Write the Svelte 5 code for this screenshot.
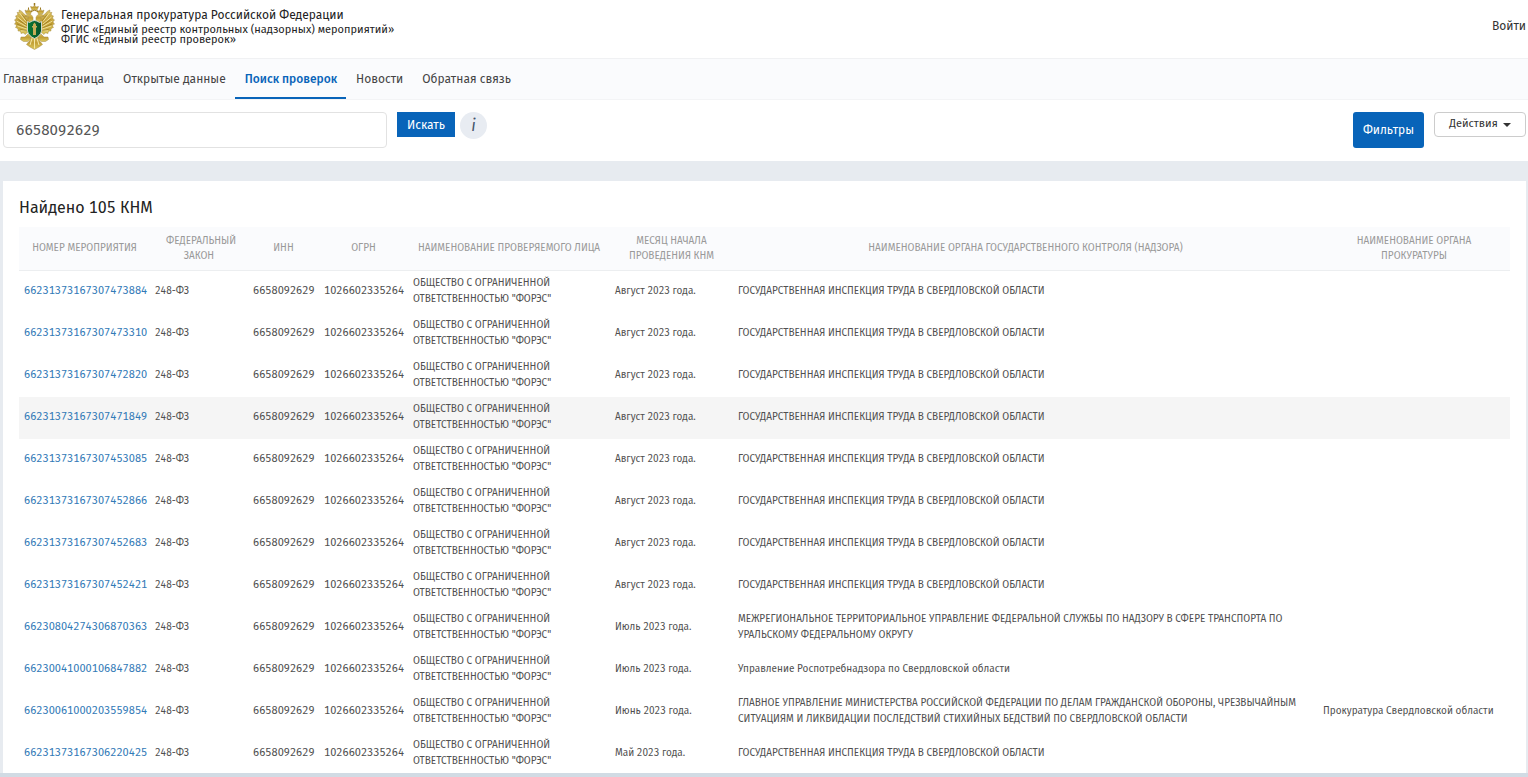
<script lang="ts">
  interface Inspection { id: string; month: string; organ: string; prosecutor?: string; }

  const law = "248-ФЗ";
  const inn = "6658092629";
  const ogrn = "1026602335264";
  const company = 'ОБЩЕСТВО С ОГРАНИЧЕННОЙ ОТВЕТСТВЕННОСТЬЮ "ФОРЭС"';
  const labour = "ГОСУДАРСТВЕННАЯ ИНСПЕКЦИЯ ТРУДА В СВЕРДЛОВСКОЙ ОБЛАСТИ";

  const nav = ["Главная страница", "Открытые данные", "Поиск проверок", "Новости", "Обратная связь"];
  const columns = [
    "Номер мероприятия",
    "Федеральный закон",
    "ИНН",
    "ОГРН",
    "Наименование проверяемого лица",
    "Месяц начала проведения КНМ",
    "Наименование органа государственного контроля (надзора)",
    "Наименование органа прокуратуры",
  ];
  const rows: Inspection[] = [
    { id: "66231373167307473884", month: "Август", organ: labour },
    { id: "66231373167307473310", month: "Август", organ: labour },
    { id: "66231373167307472820", month: "Август", organ: labour },
    { id: "66231373167307471849", month: "Август", organ: labour },
    { id: "66231373167307453085", month: "Август", organ: labour },
    { id: "66231373167307452866", month: "Август", organ: labour },
    { id: "66231373167307452683", month: "Август", organ: labour },
    { id: "66231373167307452421", month: "Август", organ: labour },
    { id: "66230804274306870363", month: "Июль", organ: "МЕЖРЕГИОНАЛЬНОЕ ТЕРРИТОРИАЛЬНОЕ УПРАВЛЕНИЕ ФЕДЕРАЛЬНОЙ СЛУЖБЫ ПО НАДЗОРУ В СФЕРЕ ТРАНСПОРТА ПО УРАЛЬСКОМУ ФЕДЕРАЛЬНОМУ ОКРУГУ" },
    { id: "66230041000106847882", month: "Июль", organ: "Управление Роспотребнадзора по Свердловской области" },
    { id: "66230061000203559854", month: "Июнь", organ: "ГЛАВНОЕ УПРАВЛЕНИЕ МИНИСТЕРСТВА РОССИЙСКОЙ ФЕДЕРАЦИИ ПО ДЕЛАМ ГРАЖДАНСКОЙ ОБОРОНЫ, ЧРЕЗВЫЧАЙНЫМ СИТУАЦИЯМ И ЛИКВИДАЦИИ ПОСЛЕДСТВИЙ СТИХИЙНЫХ БЕДСТВИЙ ПО СВЕРДЛОВСКОЙ ОБЛАСТИ", prosecutor: "Прокуратура Свердловской области" },
    { id: "66231373167306220425", month: "Май", organ: labour },
  ];

  let active = $state("Поиск проверок");
  let query = $state("6658092629");
  let selected = $state("66231373167307471849");
</script>

<div class="page">
  <header class="top">
    <svg class="emblem" viewBox="0 0 82 94" aria-hidden="true">
      <defs>
        <linearGradient id="gold" x1="0" y1="0" x2="0" y2="1">
          <stop offset="0" stop-color="#dcc366" />
          <stop offset=".5" stop-color="#c29f35" />
          <stop offset="1" stop-color="#dcc85c" />
        </linearGradient>
        <linearGradient id="green" x1="0" y1="0" x2="1" y2="0">
          <stop offset="0" stop-color="#0a7a35" />
          <stop offset="1" stop-color="#07502a" />
        </linearGradient>
      </defs>
      <!-- wings -->
      <g fill="url(#gold)" stroke="#a58a42" stroke-width="1">
        <path d="M34 33 C27 30 25 24 20 22 C17 17 13 15 10 14 C12 18 10 19 6 19 C9 23 7 25 3 26 C6 29 5 32 1 34 C5 36 4 40 1 42 C6 43 5 47 3 49 C8 50 9 53 8 56 C13 55 14 58 14 61 C18 59 21 60 22 63 C26 59 31 58 34 54Z" />
        <path d="M48 33 C55 30 57 24 62 22 C65 17 69 15 72 14 C70 18 72 19 76 19 C73 23 75 25 79 26 C76 29 77 32 81 34 C77 36 78 40 81 42 C76 43 77 47 79 49 C74 50 73 53 74 56 C69 55 68 58 68 61 C64 59 61 60 60 63 C56 59 51 58 48 54Z" />
      </g>
      <g fill="none" stroke="#f0df96" stroke-width="2">
        <path d="M11 20 L24 37 M7 28 L24 42 M5 36 L25 47 M7 46 L26 52 M14 56 L28 55" />
        <path d="M71 20 L58 37 M75 28 L58 42 M77 36 L57 47 M75 46 L56 52 M68 56 L54 55" />
      </g>
      <g fill="none" stroke="#856414" stroke-width="1">
        <path d="M16 23 L26 36 M9 33 L25 45 M6 42 L25 50 M11 52 L28 56" />
        <path d="M66 23 L56 36 M73 33 L57 45 M76 42 L57 50 M71 52 L54 56" />
      </g>
      <!-- legs, orb and sceptre -->
      <g fill="url(#gold)" stroke="#a58a42" stroke-width="1">
        <path d="M30 60 L22 68 L14 68 L13 73 L19 77 L27 77 L35 70Z" />
        <path d="M52 60 L60 68 L68 68 L69 73 L63 77 L55 77 L47 70Z" />
        <path d="M35 65 H47 L50 74 L57 83 L50 88 L41 93 L32 88 L25 83 L32 74Z" />
      </g>
      <path d="M41 70 V91 M36 71 L32 84 M46 71 L50 84" fill="none" stroke="#f4e7a5" stroke-width="2" />
      <!-- heads -->
      <g fill="url(#gold)" stroke="#a58a42" stroke-width="1">
        <path d="M38 38 V29 C36 23 30 20 27 22 L21 27 L29 27 C26 31 29 35 31 38Z" />
        <path d="M44 38 V29 C46 23 52 20 55 22 L61 27 L53 27 C56 31 53 35 51 38Z" />
        <path d="M24 21 L22 14 L26 16 L29 12 L32 16 L36 15 L33 22Z" />
        <path d="M58 21 L60 14 L56 16 L53 12 L50 16 L46 15 L49 22Z" />
        <path d="M36 14 L33 7 L38 8 L41 4 L44 8 L49 7 L46 14Z" />
      </g>
      <path d="M41 0 V5 M39 2 H43 M29 9 V13 M53 9 V13 M34 17 Q41 12 48 17" fill="none" stroke="#9b7821" stroke-width="2" />
      <!-- shield -->
      <path d="M27 37 L31 39 Q36 35 41 35 Q46 35 51 39 L55 37 V56 Q53 66 41 71 Q29 66 27 56Z" fill="url(#green)" stroke="#cfd6cb" stroke-width="2" />
      <path d="M38 64 V49 H36 V46 H38 V43 L41 39 L44 43 V46 H46 V49 H44 V64Z" fill="#c7ad58" />
    </svg>
    <div class="brand">
      <div class="owner">Генеральная прокуратура Российской Федерации</div>
      <div class="system">ФГИС «Единый реестр контрольных (надзорных) мероприятий»</div>
      <div class="system">ФГИС «Единый реестр проверок»</div>
    </div>
    <a class="login" href="#login">Войти</a>
  </header>

  <nav class="menu" aria-label="Разделы">
    {#each nav as item}
      <a href="#menu" class:active={active === item} onclick={() => (active = item)}>{item}</a>
    {/each}
  </nav>

  <form class="search" onsubmit={(e) => e.preventDefault()}>
    <input type="text" aria-label="Поиск" bind:value={query} />
    <button class="find" type="submit">Искать</button>
    <button class="info" type="button" aria-label="Справка">i</button>
    <button class="filters" type="button">Фильтры</button>
    <button class="actions" type="button">Действия <span class="caret"></span></button>
  </form>

  <main>
    <section class="card">
      <h1>Найдено 105 КНМ</h1>
      <table>
        <colgroup>
          <col class="c-id" /><col class="c-law" /><col class="c-inn" /><col class="c-ogrn" />
          <col class="c-name" /><col class="c-month" /><col /><col class="c-pros" />
        </colgroup>
        <thead>
          <tr>
            {#each columns as column}<th scope="col">{column}</th>{/each}
          </tr>
        </thead>
        <tbody>
          {#each rows as row}
            <tr class:selected={selected === row.id} onmouseenter={() => (selected = row.id)}>
              <td class="num"><a href="#inspection">{row.id}</a></td>
              <td>{law}</td>
              <td class="num">{inn}</td>
              <td class="num">{ogrn}</td>
              <td>{company}</td>
              <td>{row.month} 2023 года.</td>
              <td>{row.organ}</td>
              <td>{row.prosecutor ?? ""}</td>
            </tr>
          {/each}
        </tbody>
      </table>
    </section>
  </main>
  <footer></footer>
</div>

<style>
  :global(body) { margin: 0; background: #e7ebf0; }
  .page { display: flex; flex-direction: column; height: 100vh; overflow: hidden; color: #444; font: 12px/16px "Fira Sans", "Roboto Condensed", Roboto, sans-serif; font-variant-numeric: tabular-nums; }
  a { color: inherit; text-decoration: none; }
  button, input { box-sizing: border-box; margin: 0; font: inherit; font-variant-numeric: inherit; }
  button { cursor: pointer; }

  .top { display: flex; flex: none; align-items: flex-start; box-sizing: border-box; height: 59px; padding: 3px 2px 0 14px; border-bottom: 1px solid #f0f1f3; background: #fff; }
  .emblem { flex: none; width: 41px; height: 47px; }
  .brand { flex: 1; padding: 4px 0 0 6px; color: #222; }
  .owner { margin-bottom: 2px; }
  .system { font-size: 11px; line-height: 10px; }
  .login { margin-top: 15px; color: #333; }

  .menu { display: flex; flex: none; box-sizing: border-box; height: 41px; border-bottom: 1px solid #f3f4f6; background: #fafbfd; }
  .menu a { box-sizing: border-box; height: 40px; padding: 12px 9px 0 10px; border-bottom: 2px solid transparent; }
  .menu a:first-child { padding-left: 3px; }
  .menu a.active { border-color: #0864b9; color: #0864b9; font-weight: 500; }

  .search { display: flex; flex: none; align-items: flex-start; padding: 12px 2px 13px 3px; background: #fff; }
  .search input { width: 384px; height: 36px; margin-right: 10px; padding: 0 12px; border: 1px solid #e2e2e2; border-radius: 4px; background: #fff; color: #555; font-size: 15px; outline: 0; }
  .find { height: 25px; padding: 0 10px; border: 0; background: #0864b9; color: #fff; }
  .info { width: 27px; height: 27px; margin-left: 5px; padding: 0; border: 0; border-radius: 50%; background: #e8ecf2; color: #44546a; font-size: 16px; font-style: italic; }
  .filters { height: 36px; margin: 0 10px 0 auto; padding: 0 10px; border: 0; border-radius: 3px; background: #0864b9; color: #fff; }
  .actions { display: flex; align-items: center; justify-content: center; gap: 5px; width: 92px; height: 25px; padding: 0 0 2px; border: 1px solid #ccc; border-radius: 4px; background: #fff; color: #333; font-size: 11px; }
  .caret { margin-top: 2px; border: 4px solid transparent; border-top-color: #333; border-bottom: 0; }

  main { flex: 1; min-height: 0; padding: 20px 2px 0 3px; overflow: hidden; background: #e7ebf0; }
  .card { padding: 16px 16px 20px; background: #fff; }
  h1 { margin: 0 0 8px; color: #222; font-size: 16px; font-weight: 400; line-height: 22px; }

  table { width: 100%; border-collapse: collapse; table-layout: fixed; font-size: 10px; line-height: 16px; }
  .c-id { width: 131px; }
  .c-law { width: 98px; }
  .c-inn { width: 71px; }
  .c-ogrn { width: 89px; }
  .c-name { width: 202px; }
  .c-month { width: 123px; }
  .c-pros { width: 192px; }
  th { height: 43px; padding: 0 16px; border-bottom: 1px solid #eceef0; background: #fafbfd; color: #999; font-weight: 400; line-height: 15px; text-transform: uppercase; }
  th:first-child, th:nth-child(5), th:nth-child(6) { padding: 0 5px; }
  td { height: 38px; padding: 1px 5px 3px; color: #505050; }
  td a { color: #337ab7; }
  .num { font-size: 11px; }
  tr.selected { background: #f5f5f5; }

  footer { flex: none; height: 4px; background: #d1dbe4; }
</style>
